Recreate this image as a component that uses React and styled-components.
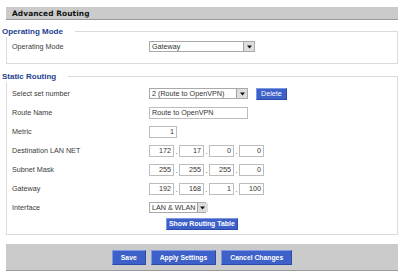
import React from 'react';
import styled, { createGlobalStyle } from 'styled-components';

const Global = createGlobalStyle`
  html, body { margin: 0; padding: 0; background: #fff; }
  body { font-family: "Liberation Sans", Arial, sans-serif; }
  * { box-sizing: border-box; }
`;

const Page = styled.div`
  width: 392px;
  margin-left: 6px;
  padding-top: 7px;
  display: flex;
  flex-direction: column;
`;

const TitleBar = styled.div`
  height: 13px;
  background: #cbcbcb;
  border-bottom: 1px solid #9a9a9a;
  padding-left: 6px;
  display: flex;
  align-items: center;
  font-family: "DejaVu Sans", Verdana, sans-serif;
  font-weight: bold;
  font-size: 7.4px;
  color: #111;
  letter-spacing: 0.1px;
`;

const Section = styled.div`
  position: relative;
  border: 1px solid #dadada;
  margin-top: ${p => p.$top}px;
  padding: ${p => p.$pt}px 0 ${p => p.$pb}px 5px;
  display: flex;
  flex-direction: column;
`;

const Legend = styled.div`
  position: absolute;
  left: -5px;
  top: -6px;
  background: #fff;
  padding-right: 12px;
  font-weight: bold;
  font-size: 8px;
  line-height: 11px;
  color: #1d3f8f;
`;

const Row = styled.div`
  height: ${p => p.$h || 19}px;
  display: grid;
  grid-template-columns: 137px 1fr;
  align-items: center;
`;

const Label = styled.div`
  font-size: 7.2px;
  color: #3a3a3a;
`;

const Controls = styled.div`
  display: flex;
  align-items: center;
  padding-left: ${p => p.$indent || 0}px;
`;

const SelectBox = styled.div`
  width: ${p => p.$w}px;
  height: 11px;
  border: 1px solid #a9a9a9;
  background: #fff;
  display: flex;
  align-items: stretch;
`;

const SelectText = styled.div`
  flex: 1;
  font-size: 7.2px;
  line-height: 9px;
  color: #333;
  padding-left: 2px;
  white-space: nowrap;
`;

const ArrowBox = styled.div`
  width: 11px;
  flex: none;
  margin-left: 1px;
  background: #dedede;
  border-left: 1px solid #a0a0a0;
  display: flex;
  align-items: center;
  justify-content: center;
`;

const TextInput = styled.div`
  width: ${p => p.$w}px;
  height: 12px;
  border: 1px solid #bdbdbd;
  background: #fff;
  font-size: 7.2px;
  line-height: 10px;
  color: #333;
  padding: 0 2px;
  text-align: ${p => (p.$right ? 'right' : 'left')};
  white-space: nowrap;
`;

const Dot = styled.span`
  width: 5px;
  font-size: 7.2px;
  color: #333;
  text-align: center;
  align-self: flex-end;
  line-height: 10px;
`;

const BlueButton = styled.div`
  height: ${p => p.$h}px;
  padding: 0 ${p => p.$px}px;
  margin-left: ${p => p.$ml || 0}px;
  background: #3e60c9;
  border: 1px solid;
  border-color: #7e98e2 #2b49a6 #2b49a6 #7e98e2;
  color: #fff;
  font-size: ${p => p.$fs}px;
  font-weight: ${p => (p.$bold ? 'bold' : 'normal')};
  display: flex;
  align-items: center;
  justify-content: center;
  white-space: nowrap;
`;

const ButtonBar = styled.div`
  margin-top: 9px;
  height: 27px;
  background: #cbcbcb;
  border-bottom: 1px solid #9a9a9a;
  display: flex;
  align-items: center;
  justify-content: center;
  gap: 5px;
`;

const Arrow = () => (
  <svg width="5" height="4" viewBox="0 0 5 4">
    <path d="M0 0.5 H5 L2.5 3.5 Z" fill="#111" />
  </svg>
);

const Select = ({ w, value }) => (
  <SelectBox $w={w}>
    <SelectText>{value}</SelectText>
    <ArrowBox><Arrow /></ArrowBox>
  </SelectBox>
);

const IP = ({ parts }) => (
  <Controls>
    {parts.map((p, i) => (
      <React.Fragment key={i}>
        {i > 0 && <Dot>.</Dot>}
        <TextInput $w={25} $right>{p}</TextInput>
      </React.Fragment>
    ))}
  </Controls>
);

export default function App() {
  return (
    <>
      <Global />
      <Page>
        <TitleBar>Advanced Routing</TitleBar>

        <Section $top={11} $pt={5} $pb={7}>
          <Legend>Operating Mode</Legend>
          <Row>
            <Label>Operating Mode</Label>
            <Controls><Select w={106} value="Gateway" /></Controls>
          </Row>
        </Section>

        <Section $top={12} $pt={7} $pb={4}>
          <Legend>Static Routing</Legend>
          <Row>
            <Label>Select set number</Label>
            <Controls>
              <Select w={99} value="2 (Route to OpenVPN)" />
              <BlueButton $h={12} $px={4} $ml={8} $fs={7.2}>Delete</BlueButton>
            </Controls>
          </Row>
          <Row>
            <Label>Route Name</Label>
            <Controls><TextInput $w={99}>Route to OpenVPN</TextInput></Controls>
          </Row>
          <Row>
            <Label>Metric</Label>
            <Controls><TextInput $w={28} $right>1</TextInput></Controls>
          </Row>
          <Row>
            <Label>Destination LAN NET</Label>
            <IP parts={['172', '17', '0', '0']} />
          </Row>
          <Row>
            <Label>Subnet Mask</Label>
            <IP parts={['255', '255', '255', '0']} />
          </Row>
          <Row>
            <Label>Gateway</Label>
            <IP parts={['192', '168', '1', '100']} />
          </Row>
          <Row>
            <Label>Interface</Label>
            <Controls><Select w={57} value="LAN & WLAN" /></Controls>
          </Row>
          <Row $h={13}>
            <span />
            <Controls $indent={17}>
              <BlueButton $h={12} $px={2} $fs={6.9} $bold>Show Routing Table</BlueButton>
            </Controls>
          </Row>
        </Section>

        <ButtonBar>
          <BlueButton $h={15} $px={8} $fs={6.8} $bold>Save</BlueButton>
          <BlueButton $h={15} $px={8} $fs={6.8} $bold>Apply Settings</BlueButton>
          <BlueButton $h={15} $px={8} $fs={6.8} $bold>Cancel Changes</BlueButton>
        </ButtonBar>
      </Page>
    </>
  );
}
